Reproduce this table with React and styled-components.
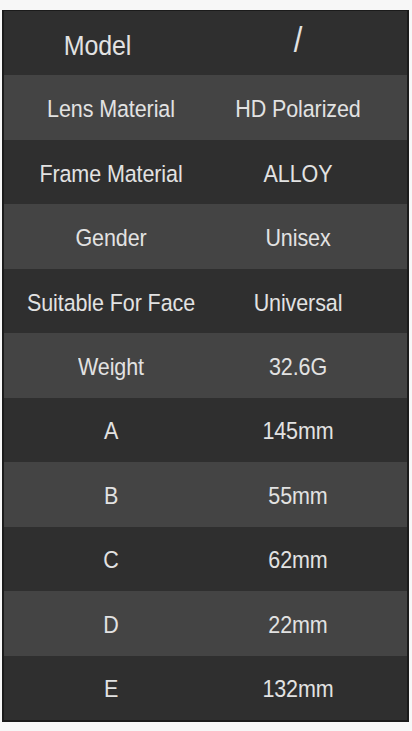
import { createGlobalStyle, styled } from 'styled-components'

const GlobalStyle = createGlobalStyle`
  html, body {
    margin: 0;
    padding: 0;
    background: #f7f7f7;
  }
`;

const Page = styled.div`
  width: 412px;
  height: 731px;
  padding: 10px 3px 9px 2px;
  box-sizing: border-box;
`;

const Table = styled.div`
  height: 712px;
  display: grid;
  grid-auto-rows: 1fr;
  border: 2px solid #1b1b1b;
  border-top-width: 1px;
  box-sizing: border-box;
  background: #2e2e2e;
  font-family: "Liberation Sans", Arial, sans-serif;
  color: #e2e2e2;
`;

const Row = styled.div`
  display: grid;
  grid-template-columns: 214px 160px 1fr;
  align-items: center;
  background: ${p => (p.$light ? '#444444' : '#2f2f2f')};
`;

const Cell = styled.div`
  text-align: center;
  white-space: nowrap;
  padding-top: 4px;
  padding-right: ${p => (p.$head ? '27px' : '0')};
`;

const Text = styled.span`
  display: inline-block;
  font-size: ${p => (p.$head ? '25px' : '21.5px')};
  transform: scaleY(1.14);
  letter-spacing: -0.1px;
`;

const Slash = styled.span`
  display: inline-block;
  font-size: 31px;
  font-weight: 300;
  margin-top: -8px;
  transform: scaleY(1.12);
`;

const specs = [
  ['Model', '/'],
  ['Lens Material', 'HD Polarized'],
  ['Frame Material', 'ALLOY'],
  ['Gender', 'Unisex'],
  ['Suitable For Face', 'Universal'],
  ['Weight', '32.6G'],
  ['A', '145mm'],
  ['B', '55mm'],
  ['C', '62mm'],
  ['D', '22mm'],
  ['E', '132mm'],
];

export default function App() {
  return (
    <Page>
      <GlobalStyle />
      <Table>
        {specs.map(([label, value], i) => (
          <Row key={label} $light={i % 2 === 1}>
            <Cell $head={i === 0}>
              <Text $head={i === 0}>{label}</Text>
            </Cell>
            <Cell>
              {i === 0 ? <Slash>{value}</Slash> : <Text>{value}</Text>}
            </Cell>
          </Row>
        ))}
      </Table>
    </Page>
  )
}
